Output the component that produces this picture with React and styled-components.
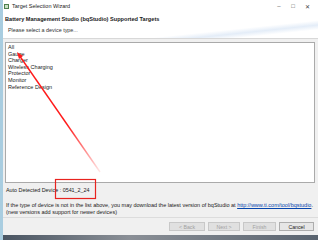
import React from 'react';
import styled, { createGlobalStyle } from 'styled-components';

const Global = createGlobalStyle`
  html, body { margin: 0; padding: 0; }
  body {
    width: 318px;
    height: 240px;
    overflow: hidden;
    font-family: "Liberation Sans", "Noto Sans", Arial, sans-serif;
    color: #1a1a1a;
  }
`;

const Frame = styled.div`
  position: relative;
  width: 318px;
  height: 240px;
  display: flex;
  flex-direction: column;
  background: #f0f0f0;
  border-left: 3px solid #a9cde0;
  box-sizing: border-box;
  overflow: hidden;
`;

const TitleBar = styled.div`
  height: 12px;
  display: flex;
  align-items: center;
  background: #fff;
  padding: 0 4px 0 1px;
  font-size: 5.5px;
  color: #222;
`;

const TitleText = styled.span`
  margin-left: 3px;
  flex: 1;
`;

const WinButton = styled.span`
  width: 14px;
  text-align: center;
  font-size: 6px;
  color: #444;
`;

const Header = styled.div`
  height: 27px;
  background: linear-gradient(174deg, #fff 70%, #e4edf8 78%, #fff 86%);
  border-bottom: 1px solid #d8d8d8;
  padding: 3px 0 0 2px;
  box-sizing: border-box;
`;

const HeaderTitle = styled.div`
  font-size: 5.6px;
  font-weight: bold;
  line-height: 8px;
`;

const HeaderSub = styled.div`
  font-size: 5.4px;
  line-height: 8px;
  margin: 3px 0 0 3px;
  color: #333;
`;

const Content = styled.div`
  flex: 1;
  padding: 3px 2px 0 2px;
  display: flex;
  flex-direction: column;
`;

const ListBox = styled.div`
  height: 141px;
  background: #fff;
  border: 1px solid #aaa;
  padding: 1px 0 0 2px;
  box-sizing: border-box;
  margin-right: 1px;
`;

const ListItem = styled.div`
  font-size: 5.5px;
  line-height: 6.6px;
  color: #222;
`;

const Detected = styled.div`
  font-size: 5.4px;
  margin: 3px 0 0 1px;
  line-height: 8px;
`;

const Info = styled.div`
  font-size: 5.5px;
  line-height: 7px;
  margin: 8px 0 0 1px;
  white-space: nowrap;
`;

const Link = styled.span`
  color: #0645ad;
  text-decoration: underline;
`;

const Footer = styled.div`
  border-top: 1px solid #dcdcdc;
  height: 17px;
  display: flex;
  justify-content: flex-end;
  align-items: center;
  gap: 3px;
  padding-right: 4px;
`;

const Button = styled.div`
  width: ${p => p.w}px;
  height: 9px;
  box-sizing: border-box;
  border: 1px solid ${p => (p.disabled ? '#c8c8c8' : '#adadad')};
  background: ${p => (p.disabled ? '#e0e0e0' : '#e6e6e6')};
  color: ${p => (p.disabled ? '#a0a0a0' : '#222')};
  font-size: 5.2px;
  display: flex;
  align-items: center;
  justify-content: center;
`;

const Taskbar = styled.div`
  height: 5px;
  background: linear-gradient(90deg, #4a5562, #8a8f96 40%, #5a6470);
`;

const Overlay = styled.svg`
  position: absolute;
  left: -3px;
  top: 0;
  pointer-events: none;
`;

const items = ['All', 'Gauge', 'Charger', 'Wireless Charging', 'Protector', 'Monitor', 'Reference Design'];

export default function App() {
  return (
    <>
      <Global />
      <Frame>
        <TitleBar>
          <svg width="5" height="5" viewBox="0 0 5 5">
            <rect x="0" y="0" width="5" height="5" fill="#4d7f4e" />
            <rect x="1" y="1" width="3" height="3" fill="#c9e0c4" />
          </svg>
          <TitleText>Target Selection Wizard</TitleText>
          <WinButton>&#8211;</WinButton>
          <WinButton>&#9633;</WinButton>
          <WinButton>&#10005;</WinButton>
        </TitleBar>
        <Header>
          <HeaderTitle>Battery Management Studio (bqStudio) Supported Targets</HeaderTitle>
          <HeaderSub>Please select a device type...</HeaderSub>
        </Header>
        <Content>
          <ListBox>
            {items.map(i => (
              <ListItem key={i}>{i}</ListItem>
            ))}
          </ListBox>
          <Detected>Auto Detected Device : 0541_2_24</Detected>
          <Info>
            If the type of device is not in the list above, you may download the latest version of bqStudio at{' '}
            <Link>http://www.ti.com/tool/bqstudio</Link>.
            <br />
            (new versions add support for newer devices)
          </Info>
        </Content>
        <Footer>
          <Button w={36} disabled>&lt; Back</Button>
          <Button w={32} disabled>Next &gt;</Button>
          <Button w={33} disabled>Finish</Button>
          <Button w={35}>Cancel</Button>
        </Footer>
        <Taskbar />
        <Overlay width="318" height="240" viewBox="0 0 318 240">
          <defs>
            <linearGradient id="fade" x1="18" y1="54" x2="100" y2="172" gradientUnits="userSpaceOnUse">
              <stop offset="0.6" stopColor="#ff1a1a" stopOpacity="1" />
              <stop offset="1" stopColor="#ff1a1a" stopOpacity="0.1" />
            </linearGradient>
          </defs>
          <line x1="19" y1="55" x2="100" y2="172" stroke="url(#fade)" strokeWidth="1.4" />
          <polygon points="17,52 23,56 19,59" fill="#ff1a1a" />
          <rect x="55.5" y="179.5" width="40" height="19" fill="none" stroke="#e8231f" strokeWidth="1.2" />
        </Overlay>
      </Frame>
    </>
  );
}
